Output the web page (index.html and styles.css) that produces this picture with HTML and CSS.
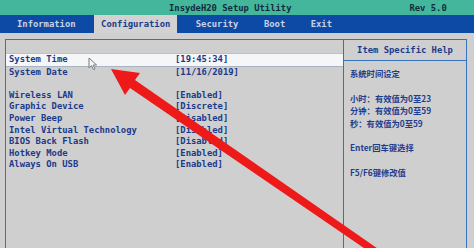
FILE: index.html
```html
<!DOCTYPE html>
<html lang="zh">
<head>
    <meta charset="UTF-8">
    <meta name="viewport" content="width=device-width, initial-scale=1.0">
    <title>InsydeH20 Setup Utility</title>
    <link rel="stylesheet" href="styles.css">
</head>
<body>

<div class="screen">
    <div class="title-bar">
        <span class="title">InsydeH20 Setup Utility</span>
        <span class="rev">Rev 5.0</span>
    </div>

    <div class="tab-bar">
        <span class="tab">Information</span>
        <span class="tab active">Configuration</span>
        <span class="tab">Security</span>
        <span class="tab">Boot</span>
        <span class="tab">Exit</span>
    </div>

    <div class="main">
        <div class="frame">
            <div class="settings">
                <div class="row selected"><span>System Time</span><span>[19:45:34]</span></div>
                <div class="row"><span>System Date</span><span>[11/16/2019]</span></div>
                <div class="row blank"></div>
                <div class="row"><span>Wireless LAN</span><span>[Enabled]</span></div>
                <div class="row"><span>Graphic Device</span><span>[Discrete]</span></div>
                <div class="row"><span>Power Beep</span><span>[Disabled]</span></div>
                <div class="row"><span>Intel Virtual Technology</span><span>[Disabled]</span></div>
                <div class="row"><span>BIOS Back Flash</span><span>[Disabled]</span></div>
                <div class="row"><span>Hotkey Mode</span><span>[Enabled]</span></div>
                <div class="row"><span>Always On USB</span><span>[Enabled]</span></div>
            </div>

            <div class="help">
                <div class="help-title">Item Specific Help</div>
                <div class="help-body">
                    <p>系统时间设定</p>
                    <p>&nbsp;</p>
                    <p>小时：有效值为0至23</p>
                    <p>分钟：有效值为0至59</p>
                    <p>秒：有效值为0至59</p>
                    <p>&nbsp;</p>
                    <p>Enter回车键选择</p>
                    <p>&nbsp;</p>
                    <p>F5/F6键修改值</p>
                </div>
            </div>
        </div>
    </div>

    <!-- mouse pointer -->
    <svg class="cursor" width="10" height="14" viewBox="0 0 10 14">
        <path d="M1 1 L1 11 L3.5 8.6 L5.4 12.6 L7 11.9 L5.2 8 L8.6 8 Z" fill="#f4f4f4" stroke="#7a7a7a" stroke-width="1"/>
    </svg>

    <!-- red annotation arrow -->
    <svg class="arrow" width="474" height="248" viewBox="0 0 474 248">
        <polygon points="111,69 140,73 135,80 384,253 380,259 130,88 125,95" fill="#ee1a1a"/>
    </svg>
</div>

</body>
</html>
```

FILE: styles.css
```css
body {
    margin: 0;
    background-color: #cfcfcf;
    font-family: 'DejaVu Sans Mono', 'Liberation Mono', monospace;
    font-weight: bold;
    font-size: 8.85px;
}

.screen {
    position: relative;
    width: 474px;
    height: 248px;
    overflow: hidden;
    background-color: #cfcfcf;
}

.title-bar {
    display: flex;
    height: 15px;
    line-height: 17px;
    background-color: #43b69c;
    color: #122c3a;
}

.title {
    margin-left: 169px;
}

.rev {
    margin-left: 118px;
}

.tab-bar {
    display: flex;
    gap: 11.5px;
    height: 18px;
    line-height: 18px;
    padding-left: 10px;
    background-color: #0c4aa6;
    color: #c9d2e4;
}

.tab {
    padding: 0 7px;
}

.tab.active {
    background-color: #d2d2d2;
    color: #1c3a8a;
}

.main {
    padding: 6px 7px 0 5px;
}

.frame {
    display: grid;
    grid-template-columns: 337px 1fr;
    height: 240px;
    border: 1px solid #3572be;
    color: #1c3a8a;
}

.settings {
    padding-top: 13px;
}

.row {
    display: grid;
    grid-template-columns: 166px 1fr;
    height: 11.6px;
    line-height: 11.6px;
    padding-left: 3px;
}

.row.selected {
    background-color: #f5f6f8;
    border-top: 1px solid #b4c2d6;
    border-bottom: 1px solid #a9b3c2;
}

.help {
    border-left: 1px solid #3572be;
}

.help-title {
    height: 20px;
    line-height: 21px;
    text-align: center;
    border-bottom: 1px solid #3572be;
}

.help-body {
    padding: 6px 0 0 6px;
    font-family: 'Noto Sans CJK SC', 'Noto Sans', sans-serif;
    font-size: 8.3px;
    color: #1e3c8c;
}

.help-body p {
    margin: 0;
    height: 12.4px;
    line-height: 12.4px;
}

.cursor {
    position: absolute;
    left: 88px;
    top: 57px;
}

.arrow {
    position: absolute;
    left: 0;
    top: 0;
}
```
